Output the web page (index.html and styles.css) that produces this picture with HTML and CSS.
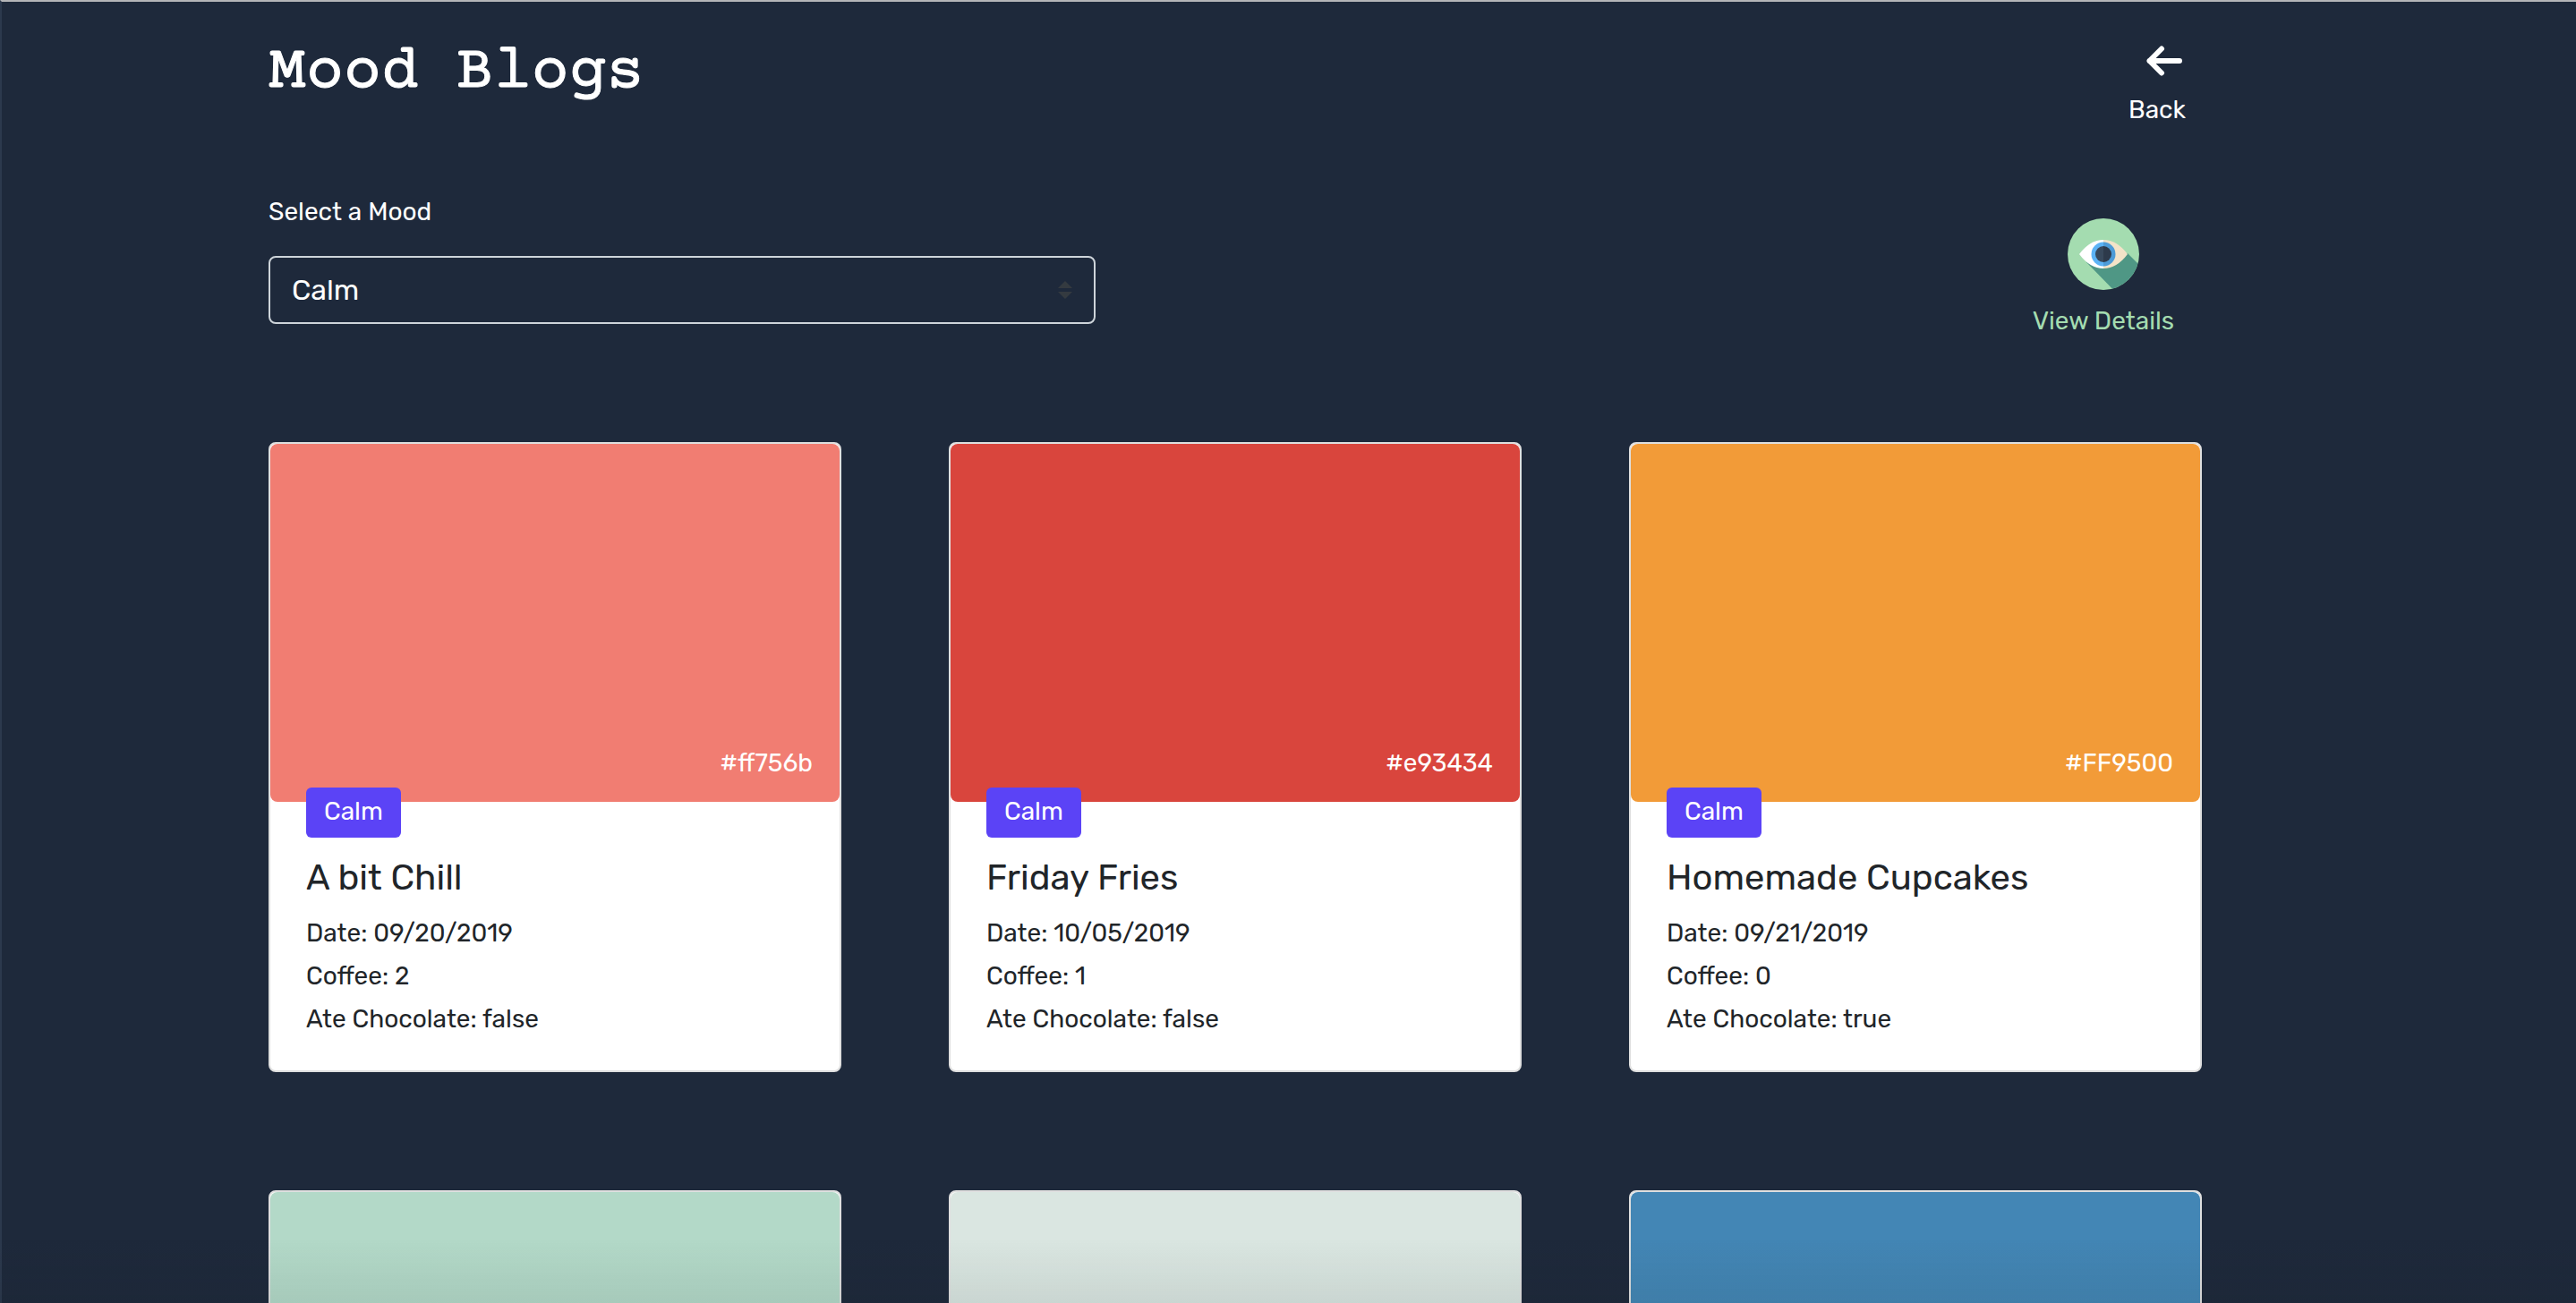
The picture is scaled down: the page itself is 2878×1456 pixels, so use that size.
FILE: index.html
```html
<!DOCTYPE html>
<html lang="en">
<head>
<meta charset="utf-8">
<meta name="viewport" content="width=device-width, initial-scale=1">
<title>Mood Blogs</title>
<link rel="stylesheet" href="styles.css">
</head>
<body>
<div class="container">
  <header class="page-header">
    <h1 class="title">Mood Blogs</h1>
    <a class="back" href="#">
      <svg class="back-icon" viewBox="0 0 40 34" aria-hidden="true"><path d="M17 3.500 3.500 17 17 30.500M3.500 17H37" fill="none" stroke="#fff" stroke-width="6" stroke-linecap="round" stroke-linejoin="round"/></svg>
      <span>Back</span>
    </a>
  </header>
  <section class="toolbar">
    <div class="field">
      <label class="label" for="mood">Select a Mood</label>
      <div class="select-wrap">
        <select class="select" id="mood"><option>Calm</option></select>
        <svg class="select-icon" viewBox="0 0 16 20" aria-hidden="true"><path d="M8 0 16 8H0zM0 12H16L8 20z" fill="#343a40"/></svg>
      </div>
    </div>
    <a class="details" href="#">
      <svg class="eye" viewBox="0 0 80 80" aria-hidden="true">
        <defs><clipPath id="disc"><circle cx="40" cy="40" r="40"/></clipPath></defs>
        <circle cx="40" cy="40" r="40" fill="#a4dcb0"/>
        <path d="M67 39 92 64V92H63L21 49z" fill="#4f9785" clip-path="url(#disc)"/>
        <path d="M13 40Q25 24 40 24V56Q25 56 13 40z" fill="#fff"/>
        <path d="M67 40Q55 24 40 24V56Q55 56 67 40z" fill="#f3e3c8"/>
        <path d="M40 26.500A13.500 13.500 0 0 0 40 53.500z" fill="#5cb3f5"/>
        <path d="M40 26.500A13.500 13.500 0 0 1 40 53.500z" fill="#4d9bd7"/>
        <path d="M40 31A9 9 0 0 0 40 49z" fill="#38495c"/>
        <path d="M40 31A9 9 0 0 1 40 49z" fill="#2d3a4b"/>
      </svg>
      <span>View Details</span>
    </a>
  </section>
  <main class="cards">
    <article class="card">
      <div class="swatch coral">#ff756b</div>
      <div class="card-body">
        <span class="badge">Calm</span>
        <h2 class="card-title">A bit Chill</h2>
        <p class="line">Date: 09/20/2019</p>
        <p class="line">Coffee: 2</p>
        <p class="line">Ate Chocolate: false</p>
      </div>
    </article>
    <article class="card">
      <div class="swatch red">#e93434</div>
      <div class="card-body">
        <span class="badge">Calm</span>
        <h2 class="card-title">Friday Fries</h2>
        <p class="line">Date: 10/05/2019</p>
        <p class="line">Coffee: 1</p>
        <p class="line">Ate Chocolate: false</p>
      </div>
    </article>
    <article class="card">
      <div class="swatch orange">#FF9500</div>
      <div class="card-body">
        <span class="badge">Calm</span>
        <h2 class="card-title">Homemade Cupcakes</h2>
        <p class="line">Date: 09/21/2019</p>
        <p class="line">Coffee: 0</p>
        <p class="line">Ate Chocolate: true</p>
      </div>
    </article>
    <article class="card"><div class="swatch mint"></div></article>
    <article class="card"><div class="swatch pale"></div></article>
    <article class="card"><div class="swatch blue"></div></article>
  </main>
</div>
<div class="shade"></div>
</body>
</html>
```
FILE: styles.css
```css
* { box-sizing: border-box; }
html { scrollbar-width: none; }
body {
  margin: 0;
  border-top: 2px solid #b4b5b8;
  border-left: 2px solid #2c394d;
  background: #1e293b;
  color: #fff;
  font: 400 28px/48px Rubik, Roboto, "Liberation Sans", sans-serif;
}
a { color: inherit; text-decoration: none; }
.container {
  max-width: 2280px;
  margin: 0 auto;
  padding-right: 120px;
}
.page-header {
  display: flex;
  justify-content: space-between;
  align-items: flex-start;
  height: 208px;
  padding-top: 36px;
}
.title {
  margin: 0;
  font: 400 70px/88px "Courier Prime", "Courier New", "Liberation Mono", monospace;
  -webkit-text-stroke: 1px #fff;
}
.back {
  display: flex;
  flex-direction: column;
  align-items: flex-end;
  gap: 14px;
  margin-right: 18px;
  padding-top: 13px;
}
.back-icon { width: 40px; height: 34px; margin-right: 4px; }
.toolbar {
  display: flex;
  justify-content: space-between;
  align-items: flex-start;
  height: 284px;
}
.field { flex: 0 1 924px; }
.label { display: block; margin: 3px 0 25px; }
.select-wrap { position: relative; }
.select {
  display: block;
  width: 100%;
  height: 76px;
  padding: 0 24px;
  appearance: none;
  border: 2px solid #ced4da;
  border-radius: 8px;
  background: transparent;
  color: #fff;
  font: inherit;
  font-size: 32px;
}
.select-icon {
  position: absolute;
  top: 28px;
  right: 26px;
  width: 16px;
  height: 20px;
}
.details {
  display: flex;
  flex-direction: column;
  align-items: center;
  gap: 11px;
  margin-right: 31px;
  padding-top: 34px;
  color: #a4dcb0;
}
.eye { width: 80px; height: 80px; }
.cards {
  display: grid;
  grid-template-columns: repeat(3, 1fr);
  gap: 132px 120px;
  margin-bottom: 132px;
}
.card {
  border: 2px solid #dfdfdf;
  border-radius: 8px;
  background: #fff;
  color: #212529;
}
.swatch {
  display: flex;
  justify-content: flex-end;
  align-items: flex-end;
  height: 400px;
  padding: 0 30px 19px;
  border-radius: 8px;
  color: #fff;
}
.coral { background: #f17d72; }
.red { background: #d9453d; }
.orange { background: #f29b38; }
.mint { background: #b3d9c8; }
.pale { background: #dae6e1; }
.blue { background: #4386b5; }
.card-body { padding: 0 40px 33px; }
.badge {
  display: block;
  position: relative;
  width: fit-content;
  height: 56px;
  margin-top: -16px;
  padding: 3px 20px;
  border-radius: 6px;
  background: #5b43f6;
  color: #fff;
}
.card-title { margin: 21px 0 14px; font-size: 40px; font-weight: 400; line-height: 48px; }
.line { margin: 0; }
.shade {
  position: fixed;
  right: 0;
  bottom: 0;
  left: 0;
  height: 72px;
  background: linear-gradient(transparent, rgba(20, 30, 30, 0.08));
  pointer-events: none;
}
```
